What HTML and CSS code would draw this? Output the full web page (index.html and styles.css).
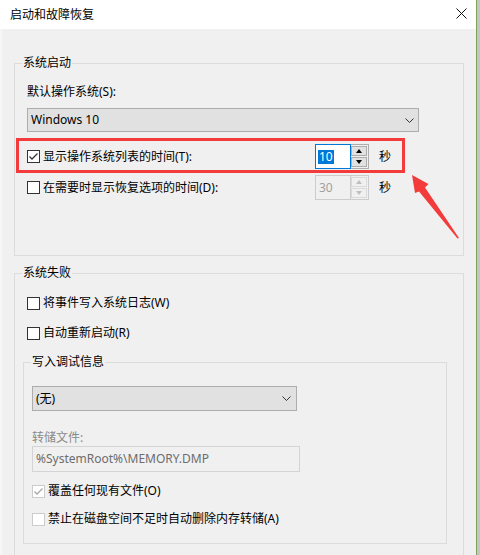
FILE: index.html
```html
<!DOCTYPE html>
<html lang="zh-CN">
<head>
<meta charset="utf-8">
<title>启动和故障恢复</title>
<link rel="stylesheet" href="styles.css">
</head>
<body>
<div class="window">
  <div class="titlebar">
    <span class="title">启动和故障恢复</span>
    <svg class="close" width="11" height="11" viewBox="0 0 11 11"><path d="M0.5 0.5 L10.5 10.5 M10.5 0.5 L0.5 10.5" stroke="#111" stroke-width="1" fill="none"/></svg>
  </div>
  <div class="content">
    <fieldset class="group g-start">
      <legend>系统启动</legend>
      <div class="body b-start">
        <div class="label">默认操作系统(S):</div>
        <div class="combo c-os">
          <span>Windows 10</span>
          <svg class="chev" width="9" height="5" viewBox="0 0 9 5"><polyline points="0.5,0.5 4.5,4.5 8.5,0.5" fill="none" stroke="#333" stroke-width="1"/></svg>
        </div>
        <div class="row r-first">
          <div class="check-wrap">
            <span class="box">
              <svg width="11" height="11" viewBox="0 0 11 11"><polyline points="1.5,5.5 4,8 9.5,2.5" fill="none" stroke="#333" stroke-width="1.3"/></svg>
            </span>
            <span class="text">显示操作系统列表的时间(T):</span>
          </div>
          <div class="spin">
            <div class="spin-input focus"><span class="sel">10</span></div>
            <div class="spin-btns">
              <span class="btn"><i class="up"></i></span>
              <span class="btn"><i class="down"></i></span>
            </div>
          </div>
          <span class="unit">秒</span>
        </div>
        <div class="row r-second">
          <div class="check-wrap">
            <span class="box"></span>
            <span class="text">在需要时显示恢复选项的时间(D):</span>
          </div>
          <div class="spin disabled">
            <div class="spin-input"><span class="val">30</span></div>
            <div class="spin-btns">
              <span class="btn"><i class="up"></i></span>
              <span class="btn"><i class="down"></i></span>
            </div>
          </div>
          <span class="unit">秒</span>
        </div>
      </div>
    </fieldset>

    <fieldset class="group g-fail">
      <legend>系统失败</legend>
      <div class="body b-fail">
        <div class="crow">
          <span class="box"></span>
          <span class="text">将事件写入系统日志(W)</span>
        </div>
        <div class="crow crow-gap">
          <span class="box"></span>
          <span class="text">自动重新启动(R)</span>
        </div>
        <fieldset class="group g-debug">
          <legend>写入调试信息</legend>
          <div class="body b-debug">
            <div class="combo c-debug">
              <span>(无)</span>
              <svg class="chev" width="9" height="5" viewBox="0 0 9 5"><polyline points="0.5,0.5 4.5,4.5 8.5,0.5" fill="none" stroke="#333" stroke-width="1"/></svg>
            </div>
            <div class="label muted dump-label">转储文件:</div>
            <div class="field">%SystemRoot%\MEMORY.DMP</div>
            <div class="crow crow-o">
              <span class="box off">
                <svg width="11" height="11" viewBox="0 0 11 11"><polyline points="1.5,5.5 4,8 9.5,2.5" fill="none" stroke="#a8a8a8" stroke-width="1.3"/></svg>
              </span>
              <span class="text">覆盖任何现有文件(O)</span>
            </div>
            <div class="crow crow-a">
              <span class="box off"></span>
              <span class="text">禁止在磁盘空间不足时自动删除内存转储(A)</span>
            </div>
          </div>
        </fieldset>
      </div>
    </fieldset>
  </div>

  <div class="annot-box"></div>
  <svg class="annot-arrow" width="60" height="72" viewBox="0 0 60 72">
    <polygon points="7,5 23.5,14 20,17.5 54,68 52.5,68.5 14,21.5 10,23" fill="#f43b3b"/>
  </svg>
</div>
</body>
</html>
```

FILE: styles.css
```css
html {
  background: #c4c4c4;
}

body {
  margin: 0;
  font-family: "Noto Sans", "Noto Sans CJK SC", sans-serif;
  font-size: 12px;
  color: #000;
}

.window {
  position: relative;
  width: 476px;
  height: 555px;
  overflow: hidden;
  border-right: 1px solid #7ea45c;
  background: #f0f0f0;
}

.titlebar {
  height: 29px;
  background: #fff;
  display: flex;
  justify-content: space-between;
  align-items: flex-start;
  padding: 0 9px 0 10px;
  box-sizing: border-box;
}

.title {
  line-height: 16px;
  margin-top: 7px;
}

.close {
  margin-top: 8px;
}

.content {
  border-left: 2px solid #f6f6f6;
  padding: 26px 0 0 12px;
}

.group {
  margin: 0;
  padding: 0;
  border: 1px solid #dcdcdc;
  min-width: 0;
  box-sizing: border-box;
}

.group > legend {
  margin-left: 7px;
  padding: 0 1px;
  line-height: 16px;
  font-size: 12px;
}

.g-start,
.g-fail {
  width: 450px;
}

.g-fail {
  margin-top: 9px;
}

.body {
  padding-left: 12px;
  padding-right: 12px;
}

.b-start {
  padding-top: 13px;
  padding-bottom: 55px;
}

.b-fail {
  padding-top: 14px;
  padding-bottom: 30px;
}

.label {
  line-height: 16px;
}

.muted {
  color: #8a8a8a;
}

.combo {
  display: flex;
  align-items: center;
  justify-content: space-between;
  box-sizing: border-box;
  background: #e1e1e1;
  border: 1px solid #adadad;
  padding: 0 5px 0 3px;
  line-height: 16px;
}

.c-os {
  width: 392px;
  height: 24px;
  margin-top: 8px;
  padding-right: 4px;
}

.c-debug {
  width: 265px;
  height: 25px;
}

.chev {
  display: block;
}

.row {
  display: flex;
  align-items: center;
  height: 25px;
}

.r-first {
  margin-top: 12px;
}

.r-second {
  margin-top: 6px;
}

.check-wrap {
  width: 288px;
  display: flex;
  align-items: center;
}

.box {
  width: 13px;
  height: 13px;
  box-sizing: border-box;
  border: 1px solid #333;
  background: #fff;
  display: flex;
  align-items: center;
  justify-content: center;
  flex: none;
}

.box.off {
  border-color: #cccccc;
}

.text {
  margin-left: 3px;
  line-height: 16px;
}

.spin {
  display: flex;
  height: 25px;
}

.spin-input {
  width: 36px;
  box-sizing: border-box;
  border: 1px solid #cccccc;
  background: #fff;
  padding-left: 2px;
  display: flex;
  align-items: center;
}

.spin-input.focus {
  border-color: #0078d7;
}

.sel {
  background: #0078d7;
  color: #fff;
  line-height: 14px;
  padding: 0 1px;
}

.val {
  color: #a0a0a0;
  padding-left: 1px;
  line-height: 14px;
}

.spin-btns {
  width: 18px;
  box-sizing: border-box;
  border: 1px solid #adadad;
  border-left: none;
  padding: 1px 1px 1px 0;
  display: flex;
  flex-direction: column;
  gap: 1px;
  background: #f0f0f0;
}

.btn {
  flex: 1;
  border: 1px solid #adadad;
  background: #e1e1e1;
  display: flex;
  align-items: center;
  justify-content: center;
}

.up {
  width: 0;
  height: 0;
  border-left: 3px solid transparent;
  border-right: 3px solid transparent;
  border-bottom: 4px solid #000;
}

.down {
  width: 0;
  height: 0;
  border-left: 3px solid transparent;
  border-right: 3px solid transparent;
  border-top: 4px solid #000;
}

.disabled .spin-input {
  background: #f0f0f0;
  border-color: #cccccc;
}

.disabled .spin-btns {
  border-color: #cccccc;
}

.disabled .btn {
  border-color: #dadada;
  background: #f0f0f0;
}

.disabled .up {
  border-bottom-color: #bfbfbf;
}

.disabled .down {
  border-top-color: #bfbfbf;
}

.unit {
  margin-left: 10px;
  line-height: 16px;
}

.crow {
  display: flex;
  align-items: center;
  height: 16px;
}

.crow-gap {
  margin-top: 14px;
}

.g-debug {
  width: 424px;
  margin: 13px 0 0 -4px;
}

.b-debug {
  padding: 16px 8px 16px 8px;
}

.dump-label {
  margin-top: 19px;
}

.field {
  width: 268px;
  height: 26px;
  box-sizing: border-box;
  border: 1px solid #d4d4d4;
  background: #f0f0f0;
  color: #6d6d6d;
  padding-left: 3px;
  line-height: 24px;
}

.crow-o {
  margin-top: 11px;
}

.crow-a {
  margin-top: 12px;
}

.annot-box {
  position: absolute;
  left: 16px;
  top: 138px;
  width: 389px;
  height: 35px;
  box-sizing: border-box;
  border: 3px solid #f43b3b;
}

.annot-arrow {
  position: absolute;
  left: 405px;
  top: 170px;
}
```
